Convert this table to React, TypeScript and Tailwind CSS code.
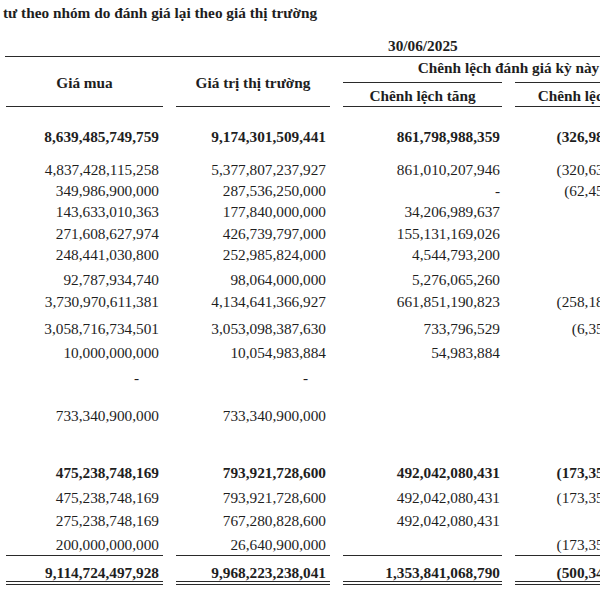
type Row = {
  mt: string;
  bold?: boolean;
  vals: [string, string, string, string];
  line?: "single" | "double";
  dash?: boolean;
};

const rows: Row[] = [
  { mt: "mt-[19.5px]", bold: true, vals: ["8,639,485,749,759", "9,174,301,509,441", "861,798,988,359", "(326,982,227,677)"] },
  { mt: "mt-[12px]", vals: ["4,837,428,115,258", "5,377,807,237,927", "861,010,207,946", "(320,631,881,277)"] },
  { mt: "mt-0", vals: ["349,986,900,000", "287,536,250,000", "-", "(62,450,650,000)"] },
  { mt: "mt-0", vals: ["143,633,010,363", "177,840,000,000", "34,206,989,637", ""] },
  { mt: "mt-[1px]", vals: ["271,608,627,974", "426,739,797,000", "155,131,169,026", ""] },
  { mt: "mt-0", vals: ["248,441,030,800", "252,985,824,000", "4,544,793,200", ""] },
  { mt: "mt-[4px]", vals: ["92,787,934,740", "98,064,000,000", "5,276,065,260", ""] },
  { mt: "mt-[1px]", vals: ["3,730,970,611,381", "4,134,641,366,927", "661,851,190,823", "(258,181,231,277)"] },
  { mt: "mt-[6px]", vals: ["3,058,716,734,501", "3,053,098,387,630", "733,796,529", "(6,350,346,400)"] },
  { mt: "mt-[3px]", vals: ["10,000,000,000", "10,054,983,884", "54,983,884", ""] },
  { mt: "mt-[4px]", dash: true, vals: ["-", "-", "", ""] },
  { mt: "mt-[17px]", vals: ["733,340,900,000", "733,340,900,000", "", ""] },
  { mt: "mt-[36px]", bold: true, vals: ["475,238,748,169", "793,921,728,600", "492,042,080,431", "(173,358,100,000)"] },
  { mt: "mt-[4px]", vals: ["475,238,748,169", "793,921,728,600", "492,042,080,431", "(173,358,100,000)"] },
  { mt: "mt-[2px]", vals: ["275,238,748,169", "767,280,828,600", "492,042,080,431", ""] },
  { mt: "mt-[3px]", line: "single", vals: ["200,000,000,000", "26,640,900,000", "", "(173,358,100,000)"] },
  { mt: "mt-[9px]", bold: true, line: "double", vals: ["9,114,724,497,928", "9,968,223,238,041", "1,353,841,068,790", "(500,340,327,677)"] },
];

const grid = "grid grid-cols-[157px_154px_159px_155px] gap-x-[13px] pl-[6px]";

function DataRow({ row }: { row: Row }) {
  const cell =
    row.line === "single"
      ? "border-b-[1.5px] border-[#2a2a2a] leading-[21px]"
      : row.line === "double"
        ? "border-b-[4px] border-double border-[#2a2a2a] leading-[16px]"
        : "leading-[21px]";
  return (
    <div className={`${grid} ${row.mt} ${row.bold ? "font-bold" : ""}`}>
      <div className={`${cell} text-right ${row.dash ? "pr-[24px]" : "pr-[4px]"}`}>{row.vals[0]}</div>
      <div className={`${cell} text-right ${row.dash ? "pr-[22px]" : "pr-[4px]"}`}>{row.vals[1]}</div>
      <div className={`${cell} text-right pr-[2px]`}>{row.vals[2]}</div>
      <div className={`${cell} text-right`}>{row.vals[3]}</div>
    </div>
  );
}

export default function App() {
  return (
    <div className="h-[600px] w-[600px] overflow-hidden bg-white font-['Liberation_Serif',serif] text-[15.3px] text-[#1e1e1e] whitespace-nowrap">
      <div className="w-[670px]">
        <div className="pl-[3px] pt-[2px] font-bold leading-[21px]">
          tư theo nhóm do đánh giá lại theo giá thị trường
        </div>

        <div className="mt-[11.5px] pl-[388px] font-bold leading-[21px]">30/06/2025</div>
        <div className="ml-[5px] h-[1.5px] bg-[#2a2a2a]" />

        {/* header */}
        <div className={`${grid} font-bold`}>
          <div className="flex items-center justify-center border-b-[1.5px] border-[#2a2a2a] pt-[2px] leading-[21px]">
            Giá mua
          </div>
          <div className="flex items-center justify-center border-b-[1.5px] border-[#2a2a2a] pt-[2px] leading-[21px]">
            Giá trị thị trường
          </div>
          <div className="col-span-2 flex flex-col">
            <div className="pl-[4px] text-center leading-[21px]">Chênh lệch đánh giá kỳ này</div>
            <div className="mt-[3.5px] grid grid-cols-[159px_155px] gap-x-[13px]">
              <div className="border-y-[1.5px] border-[#2a2a2a] pt-[2px] text-center leading-[21px]">
                Chênh lệch tăng
              </div>
              <div className="border-y-[1.5px] border-[#2a2a2a] pt-[2px] text-center leading-[21px]">
                Chênh lệch giảm
              </div>
            </div>
          </div>
        </div>

        {rows.map((r, i) => (
          <DataRow key={i} row={r} />
        ))}
      </div>
    </div>
  );
}
